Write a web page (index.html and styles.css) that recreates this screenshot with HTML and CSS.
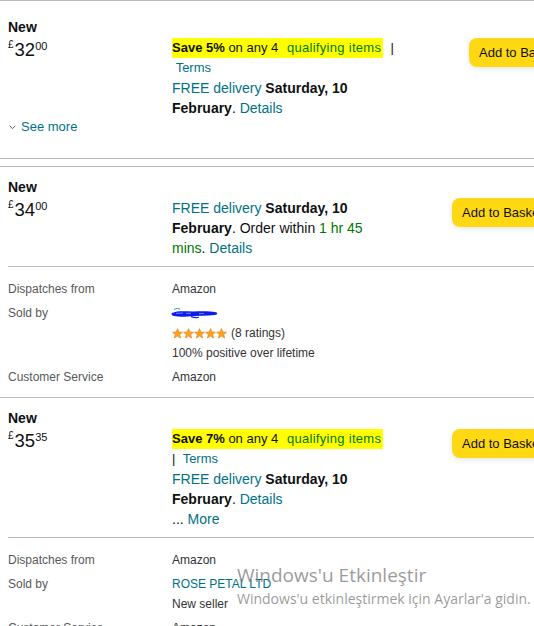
FILE: index.html
```html
<!DOCTYPE html>
<html lang="en">
<head>
    <meta charset="UTF-8">
    <meta name="viewport" content="width=device-width, initial-scale=1.0">
    <title>Other sellers</title>
    <link rel="stylesheet" href="styles.css">
</head>
<body>

<div class="offers">

    <div class="offer offer-pinned">
        <div class="offer-condition">New</div>
        <div class="offer-main">
            <div class="offer-price"><span class="price-symbol">£</span><span class="price-whole">32</span><span class="price-fraction">00</span></div>
            <div class="offer-info offer-info-wide">
                <div class="promo"><span class="highlight"><b>Save 5%</b> on any 4 <a class="qualify">qualifying items</a></span>&nbsp; <span class="sep">|</span> &nbsp;<a class="link">Terms</a></div>
                <div class="delivery"><a class="link">FREE delivery</a> <b>Saturday, 10 February</b>. <a class="link">Details</a></div>
            </div>
            <div class="offer-buy"><span class="basket-btn">Add to Basket</span></div>
        </div>
        <div class="see-more">
            <svg class="chevron" width="7" height="5" viewBox="0 0 7 5"><path d="M0.7 0.8 L3.5 3.6 L6.3 0.8" fill="none" stroke="#565959" stroke-width="1"/></svg>
            <a class="link">See more</a>
        </div>
    </div>

    <div class="offer">
        <div class="offer-condition">New</div>
        <div class="offer-main offer-main-lined">
            <div class="offer-price"><span class="price-symbol">£</span><span class="price-whole">34</span><span class="price-fraction">00</span></div>
            <div class="offer-info">
                <div class="delivery"><a class="link">FREE delivery</a> <b>Saturday, 10 February</b>. Order within <span class="countdown">1 hr 45 mins</span>. <a class="link">Details</a></div>
            </div>
            <div class="offer-buy"><span class="basket-btn">Add to Basket</span></div>
        </div>
        <div class="offer-details">
            <div class="detail-label">Dispatches from</div>
            <div class="detail-value">Amazon</div>
            <div class="detail-label">Sold by</div>
            <div class="detail-value">
                <div class="seller-line">
                    <svg class="redacted" width="48" height="12" viewBox="0 0 48 12">
                        <path d="M3 2.5 C5 1 8 1.2 9 2.4" fill="none" stroke="#1aa3b0" stroke-width="1"/>
                        <path d="M1 6 C6 3.5 14 4.2 22 4.4 C30 4.2 38 3.8 45 5.2 C47 6 46.5 7.6 44 8 C36 9.2 26 8.6 17 9.4 C10 10 4 9.8 1.5 8.6 C0.4 8 0.2 6.8 1 6 Z" fill="#0a1cf0"/>
                        <path d="M5 6.3 L12 6.1 M15 6.4 L20 6.2 M28 6.6 L33 6.5" stroke="#8fa0ff" stroke-width="0.8"/>
                        <path d="M20 9.6 C23 10.6 26 10.8 28 10.2" fill="none" stroke="#0a1cf0" stroke-width="1.2"/>
                    </svg>
                </div>
                <div class="seller-line">
                    <span class="stars">
                        <svg width="55" height="11" viewBox="0 0 55 11">
                            <defs>
                                <path id="star" d="M5.5 0.6 L6.9 4 L10.5 4.2 L7.7 6.5 L8.6 10 L5.5 8.1 L2.4 10 L3.3 6.5 L0.5 4.2 L4.1 4 Z" fill="#ffa41c" stroke="#e47911" stroke-width="0.6"/>
                            </defs>
                            <use href="#star" x="0"/>
                            <use href="#star" x="11"/>
                            <use href="#star" x="22"/>
                            <use href="#star" x="33"/>
                            <use href="#star" x="44"/>
                        </svg>
                    </span>
                    (8 ratings)
                </div>
                <div class="seller-line">100% positive over lifetime</div>
            </div>
            <div class="detail-label">Customer Service</div>
            <div class="detail-value">Amazon</div>
        </div>
    </div>

    <div class="offer">
        <div class="offer-condition">New</div>
        <div class="offer-main offer-main-lined">
            <div class="offer-price"><span class="price-symbol">£</span><span class="price-whole">35</span><span class="price-fraction">35</span></div>
            <div class="offer-info">
                <div class="promo"><span class="highlight"><b>Save 7%</b> on any 4 <a class="qualify">qualifying items</a></span>&nbsp; <span class="sep">|</span> &nbsp;<a class="link">Terms</a></div>
                <div class="delivery"><a class="link">FREE delivery</a> <b>Saturday, 10 February</b>. <a class="link">Details</a></div>
                <div class="delivery">... <a class="link">More</a></div>
            </div>
            <div class="offer-buy"><span class="basket-btn">Add to Basket</span></div>
        </div>
        <div class="offer-details">
            <div class="detail-label">Dispatches from</div>
            <div class="detail-value">Amazon</div>
            <div class="detail-label">Sold by</div>
            <div class="detail-value">
                <div class="seller-line"><a class="link">ROSE PETAL LTD</a></div>
                <div class="seller-line">New seller</div>
            </div>
            <div class="detail-label">Customer Service</div>
            <div class="detail-value">Amazon</div>
        </div>
    </div>

</div>

<div class="activation">
    <div class="activation-title">Windows'u Etkinleştir</div>
    <div class="activation-text">Windows'u etkinleştirmek için Ayarlar'a gidin.</div>
</div>

</body>
</html>
```

FILE: styles.css
```css
body {
    margin: 0;
    font-family: 'Liberation Sans', Arial, sans-serif;
    background-color: #ffffff;
    color: #0f1111;
    overflow: hidden;
}
a {
    text-decoration: none;
}
.offers {
    width: 640px;
}
.offer {
    border-top: 1px solid #bbbbbb;
    padding: 10px 0 0 8px;
}
.offer-pinned {
    padding-top: 16px;
    padding-bottom: 22px;
    border-bottom: 1px solid #bbbbbb;
    margin-bottom: 7px;
}
.offer-condition {
    font-size: 14px;
    font-weight: bold;
    line-height: 20px;
}
.offer-main {
    display: flex;
    align-items: flex-start;
    margin-top: 1px;
}
.offer-main-lined {
    border-bottom: 1px solid #bbbbbb;
    padding-bottom: 8px;
}
.offer-price {
    width: 164px;
    flex-shrink: 0;
    line-height: 20px;
    display: flex;
    align-items: flex-start;
}
.price-symbol {
    font-size: 10px;
    line-height: 12px;
    margin-top: 1px;
    margin-right: 1px;
}
.price-whole {
    font-size: 18.5px;
    line-height: 24px;
}
.price-fraction {
    font-size: 11px;
    line-height: 14px;
    margin-top: 1px;
}
.offer-info {
    width: 216px;
    flex-shrink: 0;
}
.offer-info-wide {
    width: 232px;
}
.promo {
    font-size: 13px;
    line-height: 20px;
}
.highlight {
    background: #ffff00;
    padding: 2px 2px 3px 0;
}
.qualify {
    color: #007a10;
    margin-left: 5px;
    letter-spacing: 0.3px;
}
.link {
    color: #007185;
}
.delivery {
    font-size: 14px;
    line-height: 20px;
}
.countdown {
    color: #007600;
}
.offer-buy {
    margin-left: 64px;
    flex-shrink: 0;
}
.offer-info-wide + .offer-buy {
    margin-left: 65px;
}
.basket-btn {
    display: inline-block;
    height: 29px;
    line-height: 29px;
    padding: 0 10px;
    font-size: 13px;
    background: #ffd814;
    border-radius: 8px;
    box-shadow: 0 2px 5px rgba(213, 217, 217, 0.6);
    white-space: nowrap;
}
.see-more {
    display: flex;
    align-items: center;
    gap: 5px;
    font-size: 13px;
    line-height: 18px;
}
.chevron {
    margin-left: 1px;
    margin-top: 1px;
}
.offer-details {
    display: grid;
    grid-template-columns: 164px 1fr;
    row-gap: 4px;
    padding: 12px 0 10px 0;
    font-size: 12px;
    line-height: 20px;
}
.detail-label {
    color: #565959;
}
.detail-value {
    color: #333333;
}
.seller-line {
    height: 20px;
    display: flex;
    align-items: center;
    gap: 4px;
}
.redacted {
    display: block;
    margin-left: -1px;
}
.stars svg {
    display: block;
}
.activation {
    position: absolute;
    left: 237px;
    top: 563px;
    font-family: 'Open Sans', sans-serif;
    color: rgba(120, 120, 120, 0.75);
    pointer-events: none;
    white-space: nowrap;
}
.activation-title {
    font-size: 19px;
    line-height: 25px;
}
.activation-text {
    font-size: 14px;
    line-height: 21px;
}
```
